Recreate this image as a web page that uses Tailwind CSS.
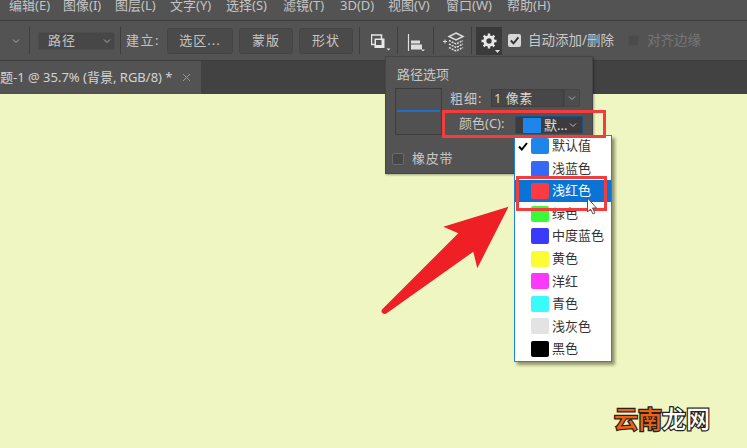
<!DOCTYPE html>
<html lang="zh">
<head>
    <meta charset="UTF-8">
    <title>路径选项</title>
    <script src="https://cdn.jsdelivr.net/npm/@tailwindcss/browser@4"></script>
</head>
<body class="w-[747px] h-[448px] overflow-hidden relative bg-[#eff6c1] font-['Noto_Sans','Noto_Sans_CJK_SC',sans-serif]">

<!-- Menu bar -->
<div class="h-[21px] bg-[#535353] border-b border-[#3c3c3c] flex items-start text-[13px] leading-[11px] text-[#c4c4c4] overflow-hidden">
    <span class="ml-[9px] w-[54px] shrink-0">编辑(E)</span>
    <span class="w-[52px] shrink-0">图像(I)</span>
    <span class="w-[55px] shrink-0">图层(L)</span>
    <span class="w-[56px] shrink-0">文字(Y)</span>
    <span class="w-[57px] shrink-0">选择(S)</span>
    <span class="w-[57px] shrink-0">滤镜(T)</span>
    <span class="w-[48px] shrink-0">3D(D)</span>
    <span class="w-[58px] shrink-0">视图(V)</span>
    <span class="w-[61px] shrink-0">窗口(W)</span>
    <span class="shrink-0">帮助(H)</span>
</div>

<!-- Options bar -->
<div class="h-[40px] bg-[#535353] border-b border-[#3c3c3c] flex items-center text-[13px] text-[#c4c4c4]">
    <svg class="ml-[12px] w-[8px] h-[8px]" viewBox="0 0 8 8"><path d="M1 2.500 4 5.500 7 2.500" fill="none" stroke="#aaa"/></svg>
    <div class="ml-[9px] w-px h-[27px] bg-[#3e3e3e]"></div>
    <div class="ml-[8px] w-[77px] h-[18px] bg-[#474747] border border-[#4d4d4d] rounded-[2px] flex items-center justify-between pl-[9px] pr-[3px] tracking-[1px]">
        <span>路径</span>
        <svg class="w-[8px] h-[8px]" viewBox="0 0 8 8"><path d="M1 2.500 4 5.500 7 2.500" fill="none" stroke="#aaa"/></svg>
    </div>
    <div class="ml-[5px] w-px h-[27px] bg-[#3e3e3e]"></div>
    <span class="ml-[5px] w-[41px] tracking-[1.5px]">建立:</span>
    <div class="w-[66px] h-[26px] bg-[#4a4a4a] border border-[#444] rounded-[3px] flex items-center justify-center tracking-[1px]">选区...</div>
    <div class="ml-[6px] w-[54px] h-[26px] bg-[#4a4a4a] border border-[#444] rounded-[3px] flex items-center justify-center tracking-[1px]">蒙版</div>
    <div class="ml-[6px] w-[54px] h-[26px] bg-[#4a4a4a] border border-[#444] rounded-[3px] flex items-center justify-center tracking-[1px]">形状</div>
    <div class="ml-[6px] w-px h-[27px] bg-[#3e3e3e]"></div>
    <!-- path ops -->
    <svg class="ml-[11px] w-[20px] h-[20px]" viewBox="0 0 20 20">
        <rect x="0.500" y="4" width="10" height="9.500" fill="#535353" stroke="#e8e8e8" stroke-width="1.500"/>
        <rect x="3.500" y="7.500" width="10" height="9.500" fill="#e8e8e8"/>
        <rect x="5" y="9" width="5.500" height="5" fill="#535353"/>
        <path d="M15.500 17.500h4l-2 2z" fill="#ddd"/>
    </svg>
    <div class="ml-[6px] w-px h-[27px] bg-[#3e3e3e]"></div>
    <!-- align -->
    <svg class="ml-[9px] w-[20px] h-[20px]" viewBox="0 0 20 20">
        <path d="M1.500 3v17" fill="none" stroke="#ddd" stroke-width="1.200"/>
        <rect x="4" y="9.500" width="9" height="3" fill="#ddd"/>
        <rect x="4" y="13.500" width="11" height="5" fill="#ddd"/>
        <path d="M14 18.500h4l-2 2z" fill="#ddd"/>
    </svg>
    <div class="ml-[6px] w-px h-[27px] bg-[#3e3e3e]"></div>
    <!-- arrange -->
    <svg class="ml-[8px] w-[24px] h-[24px]" viewBox="0 0 24 24">
        <path d="M1 12.500h4M3 10.500v4" stroke="#ddd" fill="none"/>
        <path d="M14 4l7 3.500-7 3.500-7-3.500z" fill="none" stroke="#ddd" stroke-width="1.500"/>
        <path d="M7 11.500l7 3.500 7-3.500M7 15l7 3.500 7-3.500M7 18.500l7 3.500 7-3.500" stroke="#ddd" stroke-width="1.500" stroke-dasharray="2 1" fill="none"/>
    </svg>
    <div class="ml-[5px] w-px h-[27px] bg-[#3e3e3e]"></div>
    <!-- gear -->
    <div class="ml-[4px] w-[26px] h-[28px] bg-[#3a3a3a] relative flex items-center justify-center">
        <svg class="w-[16px] h-[16px]" viewBox="0 0 16 16">
            <circle cx="8" cy="8" r="4.200" fill="none" stroke="#e8e8e8" stroke-width="3"/>
            <path d="M8 0.500v3M8 12.500v3M0.500 8h3M12.500 8h3M2.700 2.700l2.100 2.100M11.200 11.200l2.100 2.100M2.700 13.300l2.100-2.100M11.200 4.800l2.100-2.100" stroke="#e8e8e8" stroke-width="2.400"/>
        </svg>
        <svg class="absolute right-[2px] bottom-[2px] w-[5px] h-[3px]" viewBox="0 0 5 3"><path d="M0 0h5L2.500 3z" fill="#ddd"/></svg>
    </div>
    <div class="ml-[6px] w-[13px] h-[13px] bg-[#d8d8d8] rounded-[2px] flex items-center justify-center">
        <svg class="w-[11px] h-[11px]" viewBox="0 0 9 9"><path d="M1.500 4.500 3.700 6.800 7.700 2" fill="none" stroke="#333" stroke-width="1.600"/></svg>
    </div>
    <span class="ml-[7px] text-[13.500px] text-[#c8c8c8]">自动添加/删除</span>
    <div class="ml-[14px] w-[11px] h-[11px] bg-[#4b4b4b] border border-[#505050] rounded-[2px]"></div>
    <span class="ml-[8px] text-[13.500px] text-[#767676]">对齐边缘</span>
</div>

<!-- Tab bar -->
<div class="h-[33px] bg-[#424242] flex">
    <div class="w-[201px] h-[33px] bg-[#535353] flex items-center text-[13px] text-[#d4d4d4] overflow-hidden">
        <span class="whitespace-nowrap">题-1 @ 35.7% (背景, RGB/8) *</span>
        <svg class="ml-[9px] w-[9px] h-[9px]" viewBox="0 0 9 9"><path d="M1 1l7 7M8 1 1 8" stroke="#999"/></svg>
    </div>
</div>

<!-- 路径选项 panel -->
<div class="absolute left-[385px] top-[56px] w-[208px] h-[118px] bg-[#535353] border border-[#464646] shadow-[1px_1px_2px_rgba(0,0,0,0.35)] text-[13px] text-[#c8c8c8]">
    <div class="absolute left-[11px] top-[9px] leading-[16px]">路径选项</div>
    <div class="absolute left-[9px] top-[31px] w-[47px] h-[47px] bg-[#515151] border border-[#3c3c3c]">
        <div class="mt-[21px] mx-[1px] h-[2px] bg-[#1b6fc8]"></div>
    </div>
    <span class="absolute left-[64px] top-[33px] leading-[16px] tracking-[1px]">粗细:</span>
    <div class="absolute left-[105px] top-[32px] w-[73px] h-[18px] bg-[#474747] border border-[#3f3f3f] px-[2px] leading-[16px] tracking-[0.5px] text-[#d8d8d8]">1 像素</div>
    <div class="absolute left-[178px] top-[32px] w-[16px] h-[18px] bg-[#4d4d4d] border border-[#454545] rounded-r-[2px] flex items-center justify-center">
        <svg class="w-[8px] h-[8px]" viewBox="0 0 8 8"><path d="M1 2.500 4 5.500 7 2.500" fill="none" stroke="#aaa"/></svg>
    </div>
    <span class="absolute left-[73px] top-[58px] leading-[16px]">颜色(C):</span>
    <div class="absolute left-[129px] top-[59px] w-[68px] h-[18px] bg-[#3c3c3c] border border-[#1a4f8c] rounded-[2px] flex items-center text-[#e0e0e0]">
        <div class="ml-[7px] w-[18px] h-[15px] bg-[#1e86ea]"></div>
        <span class="ml-[3px] leading-[16px]">默...</span>
        <svg class="ml-[2px] w-[8px] h-[8px]" viewBox="0 0 8 8"><path d="M1 2.500 4 5.500 7 2.500" fill="none" stroke="#bbb"/></svg>
    </div>
    <div class="absolute left-[6px] top-[96px] w-[12px] h-[12px] bg-[#474747] border border-[#6b6b6b] rounded-[2px]"></div>
    <span class="absolute left-[26px] top-[93px] leading-[16px] tracking-[0.7px]">橡皮带</span>
</div>

<!-- Colour list -->
<div class="absolute left-[514px] top-[135px] w-[98px] h-[227px] bg-white border border-[#1a86d8] shadow-[3px_3px_3px_rgba(70,70,40,0.55)] text-[13px] text-[#333] overflow-hidden">
    <div class="-mt-[1.3px]">
        <div class="h-[22.550px] flex items-center pl-[16px] relative">
            <svg class="absolute left-[3px] top-[7px] w-[10px] h-[9px]" viewBox="0 0 10 9"><path d="M1 4.500 3.800 7.500 9 1" fill="none" stroke="#000" stroke-width="2"/></svg>
            <i class="w-[18px] h-[16px] rounded-[2px] bg-[#1e86ea] shrink-0"></i><span class="ml-[3px]">默认值</span>
        </div>
        <div class="h-[22.550px] flex items-center pl-[16px]"><i class="w-[18px] h-[16px] rounded-[2px] bg-[#3568f5] shrink-0"></i><span class="ml-[3px]">浅蓝色</span></div>
        <div class="h-[22.550px] flex items-center pl-[16px] bg-[#0a74d6] text-white"><i class="w-[18px] h-[16px] rounded-[2px] bg-[#fb3a42] shrink-0"></i><span class="ml-[3px]">浅红色</span></div>
        <div class="h-[22.550px] flex items-center pl-[16px]"><i class="w-[18px] h-[16px] rounded-[2px] bg-[#38fb38] shrink-0"></i><span class="ml-[3px]">绿色</span></div>
        <div class="h-[22.550px] flex items-center pl-[16px]"><i class="w-[18px] h-[16px] rounded-[2px] bg-[#3a3afb] shrink-0"></i><span class="ml-[3px]">中度蓝色</span></div>
        <div class="h-[22.550px] flex items-center pl-[16px]"><i class="w-[18px] h-[16px] rounded-[2px] bg-[#fcfc35] shrink-0"></i><span class="ml-[3px]">黄色</span></div>
        <div class="h-[22.550px] flex items-center pl-[16px]"><i class="w-[18px] h-[16px] rounded-[2px] bg-[#fb38fb] shrink-0"></i><span class="ml-[3px]">洋红</span></div>
        <div class="h-[22.550px] flex items-center pl-[16px]"><i class="w-[18px] h-[16px] rounded-[2px] bg-[#38fbfb] shrink-0"></i><span class="ml-[3px]">青色</span></div>
        <div class="h-[22.550px] flex items-center pl-[16px]"><i class="w-[18px] h-[16px] rounded-[2px] bg-[#e3e3e3] shrink-0"></i><span class="ml-[3px]">浅灰色</span></div>
        <div class="h-[22.550px] flex items-center pl-[16px]"><i class="w-[18px] h-[16px] rounded-[2px] bg-black shrink-0"></i><span class="ml-[3px]">黑色</span></div>
    </div>
</div>

<!-- Annotation boxes -->
<div class="absolute left-[442px] top-[110px] w-[164px] h-[28px] border-[3px] border-[#f33c3c]"></div>
<div class="absolute left-[516px] top-[176px] w-[91px] h-[35px] border-[3px] border-[#f33c3c]"></div>

<!-- Cursor -->
<svg class="absolute left-[586px] top-[197px] w-[14px] h-[20px]" viewBox="0 0 14 20">
    <path d="M1.500 1v14l3-3 2.500 5 2-1-2.500-5h4z" fill="#fff" stroke="#555"/>
</svg>

<!-- Arrow -->
<svg class="absolute left-0 top-0 w-[747px] h-[448px] pointer-events-none" viewBox="0 0 747 448">
    <path d="M508.500 206.700 443.300 226.700 458.300 233.300 382 309.500Q380.500 312 383 313.500 385 314.500 387 313L473.300 251.700 477.300 268.300z" fill="#ee1f25"/>
</svg>

<!-- Watermark -->
<div class="absolute left-[614px] top-[403px] flex text-[24px] leading-[32px] font-medium [paint-order:stroke_fill] [-webkit-text-stroke:2.500px_#222]">
    <span class="text-[#f0600f]">云南</span><span class="text-white">龙网</span>
</div>

</body>
</html>
